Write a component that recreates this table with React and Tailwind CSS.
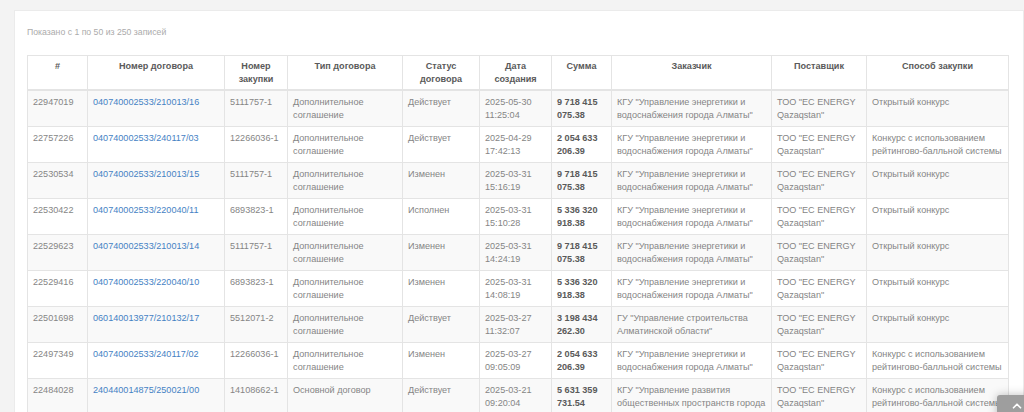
import { ChevronUp } from 'lucide-react';

const KGU = ['КГУ "Управление энергетики и', 'водоснабжения города Алматы"'];
const SUPPLIER = ['ТОО "EC ENERGY', 'Qazaqstan"'];
const OPEN = ['Открытый конкурс'];
const RATING = ['Конкурс с использованием', 'рейтингово-балльной системы'];
const ADD = ['Дополнительное', 'соглашение'];

const rows = [
  ['22947019', '040740002533/210013/16', '5111757-1', ADD, 'Действует', ['2025-05-30', '11:25:04'], ['9 718 415', '075.38'], KGU, OPEN],
  ['22757226', '040740002533/240117/03', '12266036-1', ADD, 'Действует', ['2025-04-29', '17:42:13'], ['2 054 633', '206.39'], KGU, RATING],
  ['22530534', '040740002533/210013/15', '5111757-1', ADD, 'Изменен', ['2025-03-31', '15:16:19'], ['9 718 415', '075.38'], KGU, OPEN],
  ['22530422', '040740002533/220040/11', '6893823-1', ADD, 'Исполнен', ['2025-03-31', '15:10:28'], ['5 336 320', '918.38'], KGU, OPEN],
  ['22529623', '040740002533/210013/14', '5111757-1', ADD, 'Изменен', ['2025-03-31', '14:24:19'], ['9 718 415', '075.38'], KGU, OPEN],
  ['22529416', '040740002533/220040/10', '6893823-1', ADD, 'Изменен', ['2025-03-31', '14:08:19'], ['5 336 320', '918.38'], KGU, OPEN],
  ['22501698', '060140013977/210132/17', '5512071-2', ADD, 'Действует', ['2025-03-27', '11:32:07'], ['3 198 434', '262.30'], ['ГУ "Управление строительства', 'Алматинской области"'], OPEN],
  ['22497349', '040740002533/240117/02', '12266036-1', ADD, 'Изменен', ['2025-03-27', '09:05:09'], ['2 054 633', '206.39'], KGU, RATING],
  ['22484028', '240440014875/250021/00', '14108662-1', ['Основной договор'], 'Действует', ['2025-03-21', '09:20:04'], ['5 631 359', '731.54'], ['КГУ "Управление развития', 'общественных пространств города', 'Алматы"'], RATING],
];

const headers = [
  ['#', 'w-[60px]'],
  ['Номер договора', 'w-[137px]'],
  ['Номер закупки', 'w-[63px]'],
  ['Тип договора', 'w-[115px]'],
  ['Статус договора', 'w-[77px]'],
  ['Дата создания', 'w-[72px]'],
  ['Сумма', 'w-[60px]'],
  ['Заказчик', 'w-[160px]'],
  ['Поставщик', 'w-[95px]'],
  ['Способ закупки', 'w-[142px]'],
];

const td = 'border border-[#e4e4e4] px-[5px] pt-[5px] pb-[4px] align-top';

function Lines({ items }) {
  return items.map((t, i) => (
    <span key={i} className="block whitespace-nowrap">
      {t}
    </span>
  ));
}

export default function App() {
  return (
    <div className="min-h-screen bg-[#f3f3f3] pt-[10px] pl-[14px] font-['Liberation_Sans',Arial,sans-serif]">
      <div className="bg-white border border-[#ebebeb] pl-[12px] pr-[15px] pt-[15px] pb-6">
        <p className="text-[8.7px] leading-[12px] text-[#ababab] mb-[17px]">Показано с 1 по 50 из 250 записей</p>

        <table className="table-fixed border-collapse w-[981px] text-[9.1px] leading-[13px] text-[#858585]">
          <colgroup>
            {headers.map(([h, w]) => (
              <col key={h} className={w} />
            ))}
          </colgroup>
          <thead>
            <tr>
              {headers.map(([h]) => (
                <th
                  key={h}
                  className="border border-[#e4e4e4] border-b-2 px-[5px] pt-[4px] pb-[3px] align-top text-center font-bold text-[#5a5a5a]"
                >
                  {h}
                </th>
              ))}
            </tr>
          </thead>
          <tbody>
            {rows.map((r, i) => (
              <tr key={r[0]} className={i % 2 === 0 ? 'bg-[#f9f9f9]' : 'bg-white'}>
                <td className={td}>{r[0]}</td>
                <td className={td}>
                  <a href="#" className="text-[#4582c4]">{r[1]}</a>
                </td>
                <td className={td}>{r[2]}</td>
                <td className={td}>
                  <Lines items={r[3]} />
                </td>
                <td className={td}>{r[4]}</td>
                <td className={td}>
                  <Lines items={r[5]} />
                </td>
                <td className={td + ' font-bold text-[#5a5a5a]'}>
                  <Lines items={r[6]} />
                </td>
                <td className={td}>
                  <Lines items={r[7]} />
                </td>
                <td className={td}>
                  <Lines items={SUPPLIER} />
                </td>
                <td className={td}>
                  <Lines items={r[8]} />
                </td>
              </tr>
            ))}
          </tbody>
        </table>
      </div>

      <button className="fixed left-[997px] top-[395px] w-[40px] h-[40px] bg-[#9e9e9e] rounded-[3px] shadow-[0_0_10px_rgba(0,0,0,0.25)] flex items-start justify-center pt-[4px] text-white">
        <ChevronUp className="w-[14px] h-[14px]" strokeWidth={3} />
      </button>
    </div>
  );
}
